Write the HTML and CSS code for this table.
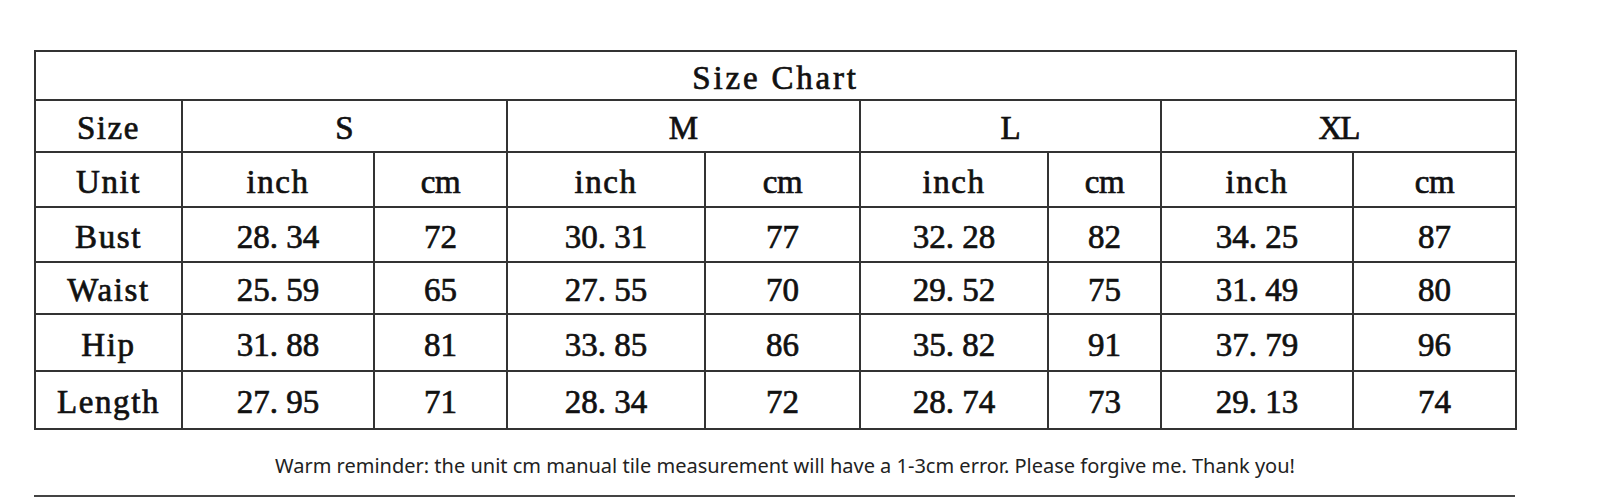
FILE: index.html
```html
<!DOCTYPE html>
<html>
<head>
<meta charset="utf-8">
<link rel="stylesheet" href="styles.css">
</head>
<body>
<div class="page">
  <table class="chart">
    <colgroup>
      <col class="c0"><col class="c1"><col class="c2"><col class="c3"><col class="c4"><col class="c5"><col class="c6"><col class="c7"><col class="c8">
    </colgroup>
    <tr class="r-title"><td colspan="9" class="title">Size Chart</td></tr>
    <tr class="r-size"><td class="w">Size</td><td colspan="2">S</td><td colspan="2">M</td><td colspan="2">L</td><td colspan="2" class="xl">XL</td></tr>
    <tr class="r-unit"><td class="w">Unit</td><td class="w">inch</td><td class="cm">cm</td><td class="w">inch</td><td class="cm">cm</td><td class="w">inch</td><td class="cm">cm</td><td class="w">inch</td><td class="cm">cm</td></tr>
    <tr class="r-bust"><td class="w">Bust</td><td>28<span class="dot">.</span>34</td><td>72</td><td>30<span class="dot">.</span>31</td><td>77</td><td>32<span class="dot">.</span>28</td><td>82</td><td>34<span class="dot">.</span>25</td><td>87</td></tr>
    <tr class="r-waist"><td class="w">Waist</td><td>25<span class="dot">.</span>59</td><td>65</td><td>27<span class="dot">.</span>55</td><td>70</td><td>29<span class="dot">.</span>52</td><td>75</td><td>31<span class="dot">.</span>49</td><td>80</td></tr>
    <tr class="r-hip"><td class="w">Hip</td><td>31<span class="dot">.</span>88</td><td>81</td><td>33<span class="dot">.</span>85</td><td>86</td><td>35<span class="dot">.</span>82</td><td>91</td><td>37<span class="dot">.</span>79</td><td>96</td></tr>
    <tr class="r-length"><td class="w">Length</td><td>27<span class="dot">.</span>95</td><td>71</td><td>28<span class="dot">.</span>34</td><td>72</td><td>28<span class="dot">.</span>74</td><td>73</td><td>29<span class="dot">.</span>13</td><td>74</td></tr>
  </table>
  <p class="note">Warm reminder: the unit cm manual tile measurement will have a 1-3cm error. Please forgive me. Thank you!</p>
  <div class="rule"></div>
</div>
</body>
</html>
```
FILE: styles.css
```css
html, body {
  margin: 0;
  padding: 0;
  background: #fff;
  width: 1600px;
  height: 498px;
  overflow: hidden;
}
.page {
  padding: 50px 0 0 34px;
  width: 1481px;
}
.chart {
  border-collapse: collapse;
  table-layout: fixed;
  width: 1481px;
  font-family: "Liberation Serif", serif;
  font-size: 33px;
  color: #111;
  -webkit-text-stroke: 0.7px #111;
}
.chart td {
  border: 2px solid #333;
  text-align: center;
  vertical-align: middle;
  padding: 5px 0 0 0;
  line-height: 1;
  white-space: nowrap;
}
.chart td.w { letter-spacing: 1.6px; }
.chart td.title { letter-spacing: 2.8px; }
.chart td.cm { letter-spacing: -0.5px; }
.chart td.xl { letter-spacing: -2px; }
.dot { letter-spacing: 8.25px; }
.c0 { width: 147px; }
.c1 { width: 192px; }
.c2 { width: 133px; }
.c3 { width: 198px; }
.c4 { width: 155px; }
.c5 { width: 188px; }
.c6 { width: 113px; }
.c7 { width: 192px; }
.c8 { width: 163px; }
.r-title { height: 49px; }
.r-size { height: 52px; }
.r-unit { height: 55px; }
.r-bust { height: 55px; }
.r-waist { height: 52px; }
.r-hip { height: 57px; }
.r-length { height: 58px; }
.note {
  margin: 22px 0 0 0;
  padding-left: 21px;
  text-align: center;
  font-family: "Noto Sans", sans-serif;
  font-size: 20px;
  line-height: 28px;
  color: #222;
}
.rule {
  margin-top: 15px;
  height: 2px;
  background: #444;
}
```
